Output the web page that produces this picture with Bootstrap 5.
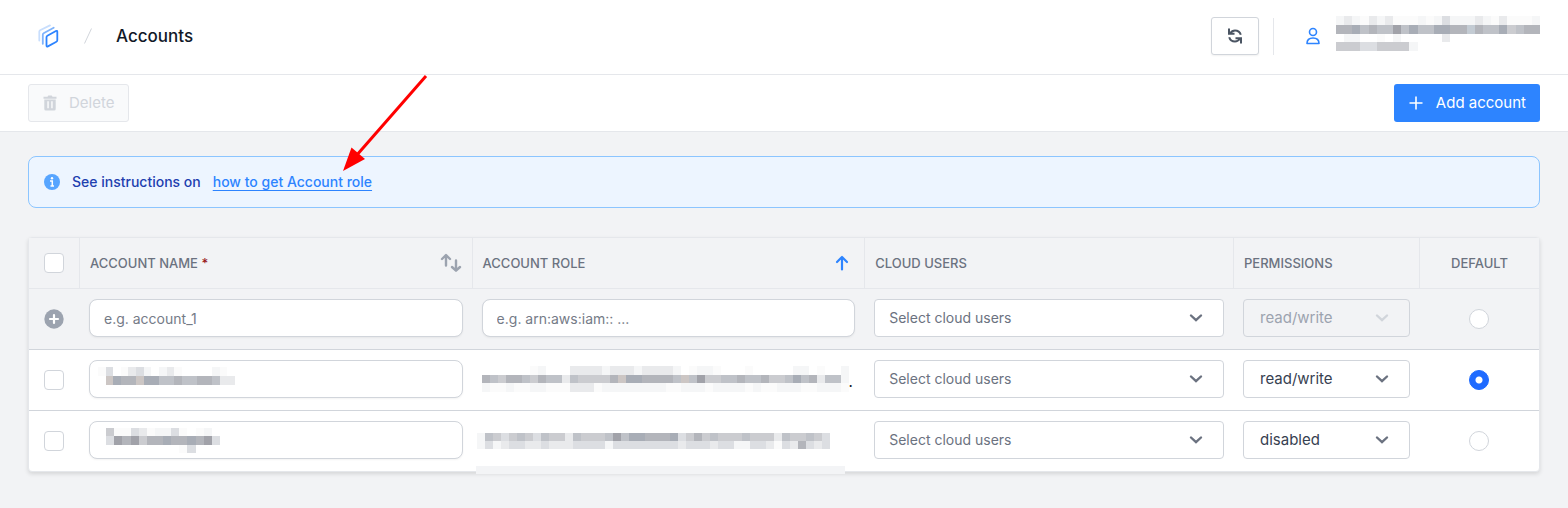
<!DOCTYPE html>
<html lang="en">
<head>
<meta charset="utf-8">
<meta name="viewport" content="width=device-width, initial-scale=1">
<title>Accounts</title>
<link href="https://cdn.jsdelivr.net/npm/bootstrap@5.3.0/dist/css/bootstrap.min.css" rel="stylesheet">
<style>
  body { font-family: Inter, sans-serif; font-size: 15px; line-height: 20px; background: #f2f3f5; color: #111827; }
  svg { display: block; flex: none; }
  .top-bar { min-height: 75px; padding-bottom: 2px; border-bottom: 1px solid #e5e7eb; }
  .tool-bar { min-height: 57px; border-bottom: 1px solid #e5e7eb; }
  .edge { padding-left: 28px; padding-right: 28px; }
  .page-title { font-size: 17px; line-height: 24px; font-weight: 500; }
  .btn { font-size: 15px; line-height: 20px; height: 38px; border-radius: 3px; padding: 0 14px; }
  .btn-refresh { width: 48px; border: 1px solid #d1d5db; box-shadow: 0 1px 2px rgba(0,0,0,.06); padding: 0; color: #4b5563; }
  .btn-delete, .btn-delete:disabled { background: #f9fafb; border: 1px solid #e5e7eb; color: #d1d5db; opacity: 1; }
  .btn-add { background: #2d84ff; border: 0; color: #fff; }
  .btn-add:hover { background: #1a6fe8; color: #fff; }
  .rule { width: 1px; height: 37px; background: #e5e7eb; margin: 0 24px 0 14px; }
  .who { margin-bottom: 6px; }
  .note { min-height: 52px; border: 1px solid #8cc5ff; border-radius: 8px; background: #edf5ff; color: #1e40af; padding: 0 15px; font-size: 14px; font-weight: 500; }
  .note a { color: #2d84ff; text-underline-offset: 3px; margin-left: 12px; }
  .grid-box { margin-top: 29px; border: 1px solid #e5e7eb; border-radius: 4px; box-shadow: 0 2px 4px rgba(0,0,0,.12); background: #fff; }
  .accounts { table-layout: fixed; width: 100%; border-collapse: separate; border-spacing: 0; }
  .accounts th { height: 51px; padding: 0 10px; font-size: 13px; font-weight: 500; color: #6b7280; background: #f2f3f5; border-bottom: 1px solid #e5e7eb; border-right: 1px solid #e5e7eb; }
  .accounts th:last-child { border-right: 0; text-align: center; }
  .accounts td { height: 61px; padding: 0 10px 2px 9px; border-bottom: 1px solid #d1d5db; vertical-align: middle; }
  .accounts td:last-child { padding-bottom: 0; }
  .accounts tr:last-child td { border-bottom: 0; height: 60px; }
  .accounts .new-row td { background: #f2f3f5; }
  .accounts .pick { padding: 0 15px; }
  .c-pick { width: 51px; } .c-wide { width: 26%; } .c-perm { width: 186px; } .c-def { width: 119px; }
  .form-control, .form-select { height: 38px; font-size: 14px; line-height: 20px; border-color: #d1d5db; padding: 0 14px; }
  .form-control { border-radius: 8px; box-shadow: 0 1px 2px rgba(0,0,0,.05); }
  .form-control::placeholder { color: #757b87; }
  .form-select { border-radius: 4px; color: #6b7280; background-size: 14px 14px; background-position: right 20px center;
    background-image: url("data:image/svg+xml,%3Csvg xmlns='http://www.w3.org/2000/svg' viewBox='0 0 14 14'%3E%3Cpath d='M2 4.5l5 4.7 5-4.7' fill='none' stroke='%236b7280' stroke-width='2.4' stroke-linecap='round'/%3E%3C/svg%3E"); }
  .form-select.perm { color: #374151; padding-left: 16px; font-size: 15px; }
  .form-select:disabled { background-color: #f2f3f5;
    background-image: url("data:image/svg+xml,%3Csvg xmlns='http://www.w3.org/2000/svg' viewBox='0 0 14 14'%3E%3Cpath d='M2 4.5l5 4.7 5-4.7' fill='none' stroke='%23d1d5db' stroke-width='2.4' stroke-linecap='round'/%3E%3C/svg%3E"); }
  .form-select.perm:disabled { color: #9ca3af; }
  .form-check-input { width: 20px; height: 20px; margin: 0; display: block; border-color: #d1d5db; }
  .form-check-input[type=checkbox] { border-radius: 4px; }
  .form-check-input[type=radio]:checked { background-color: #1f6bff; border-color: #1f6bff; background-image: radial-gradient(circle, #fff 3px, transparent 4px); }
  .req { color: #991b1b; }
  .over-field { left: 9px; top: 7px; }
  .accounts .tight { padding-left: 4px; padding-bottom: 0; }
  .strip { left: 3px; right: 20px; bottom: -3px; height: 8px; background: #f3f4f6; }
  .pointer { left: 340px; top: 72px; pointer-events: none; }
</style>
</head>
<body>
<header class="top-bar edge bg-white d-flex align-items-center">
  <a href="#" aria-label="Home" class="ms-2">
    <svg width="24" height="26" viewBox="0 0 24 26" fill="none" stroke-width="1.8" stroke-linejoin="round" stroke-linecap="round">
      <path d="M3.3 17.5V8.8q0-1 .8-1.5L14 2.4" stroke="#c8defd"/>
      <path d="M6.8 20.8V11.7q0-1 .8-1.5L17.7 4.700" stroke="#7fb3fb"/>
      <path d="M10.500 14.200q0-1 .9-1.500L19.900 8q1.400-.7 1.400.8v8.400q0 1-.9 1.500l-8.500 4.700q-1.400.7-1.400-.8z" stroke="#2d84ff"/>
    </svg>
  </a>
  <svg class="ms-4" width="8" height="16" viewBox="0 0 8 16" stroke="#d1d5db"><path d="M.5 15.500L7.500.5"/></svg>
  <h1 class="page-title mb-0 ms-4">Accounts</h1>
  <div class="ms-auto d-flex align-items-center">
    <button type="button" class="btn btn-refresh bg-white d-flex align-items-center justify-content-center" aria-label="Refresh">
      <svg width="16" height="16" viewBox="0 0 16 16" fill="none" stroke="currentColor" stroke-width="2">
        <path d="M2 .5v5.300h5.500M3 5.500Q5 2.500 8 2.500q4.500 0 5.800 4.300M14 15.500V10.200H8.500M13 10.500Q11 13.500 8 13.500 3.500 13.500 2.200 9.200"/>
      </svg>
    </button>
    <div class="rule"></div>
    <svg class="ms-2" width="14" height="18" viewBox="0 0 14 18" fill="none" stroke="#2d84ff" stroke-width="1.600" stroke-linejoin="round"><circle cx="7" cy="5" r="3.500"/><path d="M1 16.500q0-5.500 6-5.500t6 5.500z"/></svg>
    <svg class="ms-3 who" width="204" height="35" data-rows="1210212000101311121020001 6675655857557766a65574566 .11..0.1.....2 4443344441"></svg>
  </div>
</header>
<div class="tool-bar edge bg-white d-flex align-items-center justify-content-between">
  <button type="button" class="btn btn-delete d-flex align-items-center" disabled>
    <svg class="me-2" width="14" height="16" viewBox="0 0 14 16" fill="currentColor"><path fill-rule="evenodd" d="M.5 1.800H4.500L5.300.5h3.400l.8 1.300h4v2H.5zM1.300 4.500h11.400V14q0 1.500-1.500 1.500H2.800q-1.500 0-1.500-1.500zM4.300 6.200v7h1.500v-7zM8.200 6.200v7h1.500v-7z"/></svg>
    <span class="ms-1">Delete</span>
  </button>
  <button type="button" class="btn btn-add d-flex align-items-center">
    <svg class="me-2" width="16" height="16" viewBox="0 0 16 16" stroke="currentColor" stroke-width="1.600"><path d="M8 1.500v13M1.500 8h13"/></svg>
    <span class="ms-1">Add account</span>
  </button>
</div>
<main class="edge pt-4 pb-4">
  <div class="note d-flex align-items-center">
    <svg width="16" height="16" viewBox="0 0 16 16"><circle cx="8" cy="8" r="8" fill="#57a5ff"/><circle cx="8" cy="4.200" r="1.200" fill="#fff"/><path d="M6 7h2.300v4.800M6.500 12h3.500" fill="none" stroke="#fff" stroke-width="1.500"/></svg>
    <span class="ms-2 ps-1">See instructions on</span>
    <a href="#">how to get Account role</a>
  </div>
  <div class="grid-box">
    <table class="accounts">
      <colgroup><col class="c-pick"><col class="c-wide"><col class="c-wide"><col><col class="c-perm"><col class="c-def"></colgroup>
      <thead>
        <tr>
          <th class="pick"><input class="form-check-input" type="checkbox" aria-label="Select all accounts"></th>
          <th><div class="d-flex align-items-center justify-content-between"><span>ACCOUNT NAME <span class="req">*</span></span>
            <svg width="22" height="20" viewBox="0 0 22 20" fill="none" stroke="#9ca3af" stroke-width="2.400" stroke-linecap="round" stroke-linejoin="round"><path d="M6 12.500V2.500M2 6l4-4 4 4M16 7.500v9.700M12 14l4 3.700 4-3.700"/></svg></div></th>
          <th><div class="d-flex align-items-center justify-content-between"><span>ACCOUNT ROLE</span>
            <svg class="me-1" width="16" height="16" viewBox="0 0 16 16" fill="none" stroke="#2d84ff" stroke-width="2.200" stroke-linecap="round" stroke-linejoin="round"><path d="M8 14.500V2M3 7l5-5 5 5"/></svg></div></th>
          <th>CLOUD USERS</th>
          <th>PERMISSIONS</th>
          <th>DEFAULT</th>
        </tr>
      </thead>
      <tbody>
        <tr class="new-row">
          <td class="pick"><button type="button" class="d-block border-0 bg-transparent p-0" aria-label="Add row"><svg width="20" height="20" viewBox="0 0 20 20"><circle cx="10" cy="10" r="9.700" fill="#9ca3af"/><path d="M10 6v8M6 10h8" stroke="#fff" stroke-width="2.200" stroke-linecap="round"/></svg></button></td>
          <td><input type="text" class="form-control" placeholder="e.g. account_1" aria-label="Account name"></td>
          <td><input type="text" class="form-control" placeholder="e.g. arn:aws:iam:: ..." aria-label="Account role"></td>
          <td><select class="form-select" aria-label="Cloud users"><option>Select cloud users</option></select></td>
          <td><select class="form-select perm" aria-label="Permissions" disabled><option>read/write</option><option>disabled</option></select></td>
          <td><input class="form-check-input mx-auto" type="radio" name="default" aria-label="Default"></td>
        </tr>
        <tr>
          <td class="pick"><input class="form-check-input" type="checkbox" aria-label="Select account"></td>
          <td><div class="position-relative"><input type="text" class="form-control" aria-label="Account name"><svg class="position-absolute over-field" width="137" height="18" data-rows="03.0231.120....10 .97669775565566522"></svg></div></td>
          <td><div class="d-flex align-items-end"><svg width="367" height="26" data-rows="......01...22221222122221.0110...0.....11.0..1 6546654655254444697766665958445565564457562551 1001001100022201111111100111011110100111001110"></svg><span>.</span></div></td>
          <td><select class="form-select" aria-label="Cloud users"><option>Select cloud users</option></select></td>
          <td><select class="form-select perm" aria-label="Permissions"><option>read/write</option><option>disabled</option></select></td>
          <td><input class="form-check-input mx-auto" type="radio" name="default" checked aria-label="Default"></td>
        </tr>
        <tr>
          <td class="pick"><input class="form-check-input" type="checkbox" aria-label="Select account"></td>
          <td><div class="position-relative"><input type="text" class="form-control" aria-label="Account name"><svg class="position-absolute over-field" width="122" height="25" data-rows=".4003201130.01. .38684667667683 ..........03..."></svg></div></td>
          <td class="position-relative tight"><svg width="353" height="16" data-rows="15434543544254445857766673464544454442544543 13123322322233331333333332333233113320326323"></svg><div class="position-absolute strip"></div></td>
          <td><select class="form-select" aria-label="Cloud users"><option>Select cloud users</option></select></td>
          <td><select class="form-select perm" aria-label="Permissions"><option>read/write</option><option selected>disabled</option></select></td>
          <td><input class="form-check-input mx-auto" type="radio" name="default" aria-label="Default"></td>
        </tr>
      </tbody>
    </table>
  </div>
</main>
<svg class="position-absolute pointer" width="90" height="102" viewBox="0 0 90 102"><path d="M86 4L16 84" stroke="#f00" stroke-width="3"/><path d="M3 99L11.500 75.500 25 87z" fill="#f00"/></svg>
<script src="https://cdn.jsdelivr.net/npm/bootstrap@5.3.0/dist/js/bootstrap.bundle.min.js"></script>
<script>
  // Pixelated blocks that hide private values: one character per cell, one word per row.
  const tones = ['#fbfbfb', '#f5f6f7', '#e9eaec', '#dcdee2', '#cbccd0', '#bfc2c8', '#b3b5bb', '#a8adb6', '#a1a2a9', '#ccc6c4', '#c3cbd3'];
  document.querySelectorAll('svg[data-rows]').forEach(svg => {
    const rows = svg.dataset.rows.split(' ');
    svg.setAttribute('viewBox', `0 0 ${Math.max(...rows.map(r => r.length))} ${rows.length}`);
    svg.setAttribute('preserveAspectRatio', 'none');
    svg.setAttribute('shape-rendering', 'crispEdges');
    svg.setAttribute('aria-hidden', 'true');
    svg.innerHTML = rows.map((row, y) => [...row].map((c, x) =>
      c === '.' ? '' : `<rect x="${x}" y="${y}" width="1" height="1" fill="${tones[parseInt(c, 16)]}"/>`).join('')).join('');
  });
</script>
</body>
</html>
